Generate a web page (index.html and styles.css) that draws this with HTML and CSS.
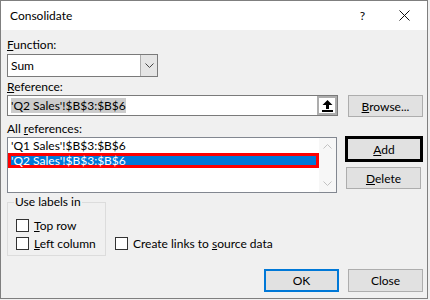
FILE: index.html
```html
<!DOCTYPE html>
<html lang="en">
<head>
    <meta charset="UTF-8">
    <title>Consolidate</title>
    <link rel="stylesheet" href="styles.css">
</head>
<body>
    <div class="window">
        <!-- Title bar -->
        <div class="titlebar">
            <span class="title">Consolidate</span>
            <span class="help">?</span>
            <svg class="close-x" width="11" height="11" viewBox="0 0 11 11">
                <path d="M0.5 0.5 L10.5 10.5 M10.5 0.5 L0.5 10.5" stroke="#111" stroke-width="1" fill="none"/>
            </svg>
        </div>

        <div class="dialog">
            <div class="field-label"><u>F</u>unction:</div>
            <div class="combo">
                <span class="combo-value">Sum</span>
                <span class="combo-btn">
                    <svg width="9" height="5" viewBox="0 0 9 5">
                        <path d="M0.5 0.5 L4.5 4.5 L8.5 0.5" stroke="#444" stroke-width="1" fill="none"/>
                    </svg>
                </span>
            </div>

            <div class="field-label ref-label"><u>R</u>eference:</div>
            <div class="ref-row">
                <div class="ref-input">
                    <span class="sel-text">'Q2 Sales'!$B$3:$B$6</span>
                    <span class="collapse-btn">
                        <svg width="11" height="12" viewBox="0 0 11 12">
                            <path d="M5.5 0 L10.5 5 L7 5 L7 9 L4 9 L4 5 L0.5 5 Z" fill="#000"/>
                            <rect x="0" y="10" width="11" height="2" fill="#000"/>
                        </svg>
                    </span>
                </div>
                <button class="btn"><u>B</u>rowse...</button>
            </div>

            <div class="field-label all-label">All <u>r</u>eferences:</div>
            <div class="list-row">
                <div class="ref-list">
                    <div class="items">
                        <div class="item">'Q1 Sales'!$B$3:$B$6</div>
                        <div class="item selected">'Q2 Sales'!$B$3:$B$6</div>
                    </div>
                    <div class="scroll">
                        <svg width="9" height="5" viewBox="0 0 9 5">
                            <path d="M0.5 4.5 L4.5 0.5 L8.5 4.5" stroke="#c2c2c2" stroke-width="1" fill="none"/>
                        </svg>
                        <svg width="9" height="5" viewBox="0 0 9 5">
                            <path d="M0.5 0.5 L4.5 4.5 L8.5 0.5" stroke="#c2c2c2" stroke-width="1" fill="none"/>
                        </svg>
                    </div>
                </div>
                <div class="side-buttons">
                    <button class="btn btn-add"><u>A</u>dd</button>
                    <button class="btn btn-delete"><u>D</u>elete</button>
                </div>
            </div>

            <div class="options">
                <fieldset class="labels-group">
                    <legend>Use labels in</legend>
                    <div class="check"><span class="box"></span><span><u>T</u>op row</span></div>
                    <div class="check"><span class="box"></span><span><u>L</u>eft column</span></div>
                </fieldset>
                <div class="check links-check"><span class="box"></span><span>Create links to <u>s</u>ource data</span></div>
            </div>

            <div class="footer">
                <button class="btn btn-ok">OK</button>
                <button class="btn">Close</button>
            </div>
        </div>
    </div>
</body>
</html>
```

FILE: styles.css
```css
body {
    margin: 0;
    background: #f0f0f0;
    font-family: Lato, "Liberation Sans", sans-serif;
    font-size: 12px;
    color: #000;
}
.window {
    width: 426px;
    height: 297px;
    border: 1px solid #7f7f7f;
    background: #f0f0f0;
}
.titlebar {
    height: 29px;
    background: #fff;
    display: flex;
    align-items: center;
    padding-left: 9px;
}
.title {
    font-size: 12px;
    flex: 1;
}
.help {
    margin-right: 34px;
    font-size: 12px;
}
.close-x {
    margin-right: 17px;
}
.dialog {
    padding: 7px 4px 0 6px;
}
.field-label {
    height: 16px;
    line-height: 16px;
}
.combo {
    margin-top: 1px;
    width: 149px;
    height: 21px;
    border: 1px solid #7a7a7a;
    background: #fff;
    display: flex;
}
.combo-value {
    flex: 1;
    padding-left: 3px;
    line-height: 21px;
}
.combo-btn {
    width: 16px;
    background: #e5e5e5;
    border-left: 1px solid #adadad;
    display: flex;
    align-items: center;
    justify-content: center;
}
.ref-label {
    margin-top: 2px;
}
.ref-row {
    display: flex;
    gap: 10px;
    height: 22px;
}
.ref-input {
    width: 329px;
    height: 19px;
    border: 1px solid #7a7a7a;
    background: #fff;
    display: flex;
    align-items: center;
    justify-content: space-between;
}
.sel-text {
    margin-left: 3px;
    background: #cccccc;
    line-height: 15px;
}
.collapse-btn {
    width: 16px;
    height: 15px;
    border: 2px solid #adadad;
    background: #fff;
    display: flex;
    align-items: center;
    justify-content: center;
}
.btn {
    width: 75px;
    height: 22px;
    padding: 0;
    background: #e1e1e1;
    border: 1px solid #adadad;
    font-family: inherit;
    font-size: 12px;
    color: #000;
}
.all-label {
    margin-top: 4px;
}
.list-row {
    display: flex;
    gap: 8px;
}
.ref-list {
    width: 330px;
    height: 54px;
    border: 1px solid #828790;
    background: #fff;
    display: flex;
}
.items {
    flex: 1;
    padding-top: 1px;
}
.item {
    height: 14px;
    line-height: 14px;
    padding-left: 3px;
}
.item.selected {
    height: 9px;
    line-height: 9px;
    margin-top: 0;
    background: #0078d7;
    color: #fff;
    border: 3px solid #ff0000;
    padding-left: 0;
}
.scroll {
    width: 17px;
    background: #f7f7f7;
    display: flex;
    flex-direction: column;
    justify-content: space-between;
    align-items: center;
    padding: 6px 0;
}
.side-buttons {
    display: flex;
    flex-direction: column;
    margin-top: -1px;
}
.btn-add {
    width: 78px;
    height: 26px;
    border: 3px solid #000;
}
.btn-delete {
    margin-top: 5px;
    margin-left: 1px;
}
.options {
    display: flex;
    margin-top: 1px;
}
.labels-group {
    margin: 0;
    width: 99px;
    padding: 6px 0 3px 8px;
    border: 1px solid #dcdcdc;
    box-sizing: border-box;
    height: 62px;
}
.labels-group legend {
    padding: 0 1px;
    margin-left: -2px;
    line-height: 16px;
}
.check {
    display: flex;
    align-items: center;
    gap: 5px;
    height: 18px;
    white-space: nowrap;
}
.box {
    width: 11px;
    height: 11px;
    border: 1px solid #333;
    background: #fff;
}
.links-check {
    align-self: flex-end;
    margin-bottom: 4px;
    margin-left: 9px;
}
.footer {
    display: flex;
    justify-content: flex-end;
    gap: 9px;
    margin-top: 13px;
}
.footer .btn {
    height: 23px;
}
.btn-ok {
    border: 2px solid #0078d7;
}
```
